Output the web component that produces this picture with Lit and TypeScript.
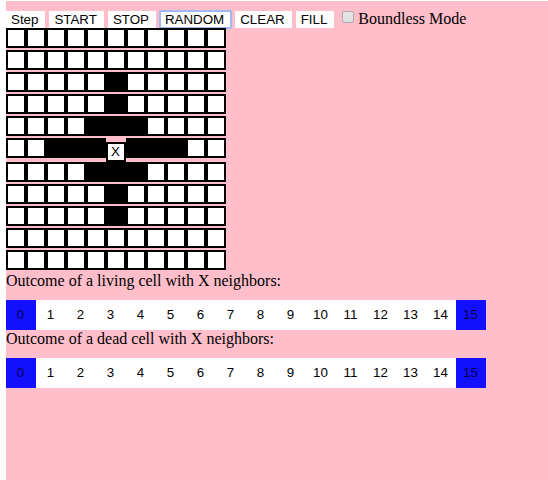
import { LitElement, html, css } from "lit";
import { customElement, state } from "lit/decorators.js";
import { classMap } from "lit/directives/class-map.js";

const START_BOARD = [
  "...........",
  "...........",
  ".....#.....",
  ".....#.....",
  "....###....",
  "..###X###..",
  "....###....",
  ".....#.....",
  ".....#.....",
  "...........",
  "...........",
];

@customElement("rule-row")
class RuleRow extends LitElement {
  static properties = { label: { type: String } };
  declare label: string;

  static styles = css`
    :host {
      display: block;
    }
    .label {
      margin: 0 0 10px;
      line-height: 18px;
    }
    .rules {
      display: flex;
    }
    .rule {
      flex: none;
      box-sizing: border-box;
      width: 30px;
      height: 30px;
      padding: 0 1px 2px 0;
      border: 0;
      background: #fff;
      color: #000;
      font-family: "Liberation Sans", Arial, sans-serif;
    }
    .on {
      background: #130fff;
      color: #06044c;
    }
  `;

  render() {
    return html`
      <p class="label">${this.label}</p>
      <div class="rules" role="group" aria-label=${this.label}>
        ${Array.from(
          { length: 16 },
          (_, n) => html`<button class=${classMap({ rule: true, on: n === 0 || n === 15 })}>${n}</button>`
        )}
      </div>
    `;
  }
}

@customElement("app-root")
class AppRoot extends LitElement {
  @state() private board = START_BOARD.map((row) => [...row]);

  static styles = css`
    :host {
      display: block;
      box-sizing: border-box;
      min-height: 100vh;
      padding: 1px 0 0 6px;
      background: #ffbeca content-box;
      font-family: "Liberation Serif", "Times New Roman", serif;
      font-size: 16px;
      color: #000;
    }
    main {
      padding-top: 10px;
    }
    .toolbar {
      display: flex;
      align-items: flex-start;
      gap: 4px;
      height: 17px;
    }
    .tool {
      height: 17px;
      padding: 0 7px 0 5px;
      border: 0;
      background: #fff;
      color: #000;
      font-family: "Liberation Sans", Arial, sans-serif;
      line-height: 17px;
      white-space: nowrap;
    }
    .active {
      outline: 2px solid #a0b9f2;
      outline-offset: -1px;
      border-radius: 1px;
    }
    .mode {
      display: flex;
      align-items: flex-start;
      gap: 4px;
      margin-left: 4px;
      line-height: 16px;
      white-space: nowrap;
    }
    .check {
      appearance: none;
      box-sizing: border-box;
      width: 12px;
      height: 12px;
      margin: 0;
      border: 1px solid #b0a8aa;
      border-radius: 2px;
      background: linear-gradient(#e6e6e6, #dcdcdc);
    }
    .check:checked {
      background: #555;
    }
    .row {
      display: flex;
      align-items: flex-start;
      margin-bottom: 2px;
    }
    .cell {
      flex: none;
      box-sizing: border-box;
      width: 20px;
      height: 20px;
      padding: 0 1px 0 0;
      border: 2px solid #000;
      background: #fff;
      color: #000;
      font-family: "Liberation Sans", Arial, sans-serif;
      line-height: 16px;
    }
    .alive {
      background: #000;
    }
    .marked {
      margin-top: 4px;
    }
    .row:has(.marked) {
      margin-bottom: 0;
    }
  `;

  private toggle(r: number, c: number) {
    this.board = this.board.map((row, y) =>
      row.map((v, x) => (y === r && x === c ? (v === "#" ? "." : "#") : v))
    );
  }

  render() {
    return html`
      <main>
        <div class="toolbar">
          ${["Step", "START", "STOP", "RANDOM", "CLEAR", "FILL"].map(
            (name) => html`<button class=${classMap({ tool: true, active: name === "RANDOM" })}>${name}</button>`
          )}
          <label class="mode"><input class="check" type="checkbox" />Boundless Mode</label>
        </div>
        ${this.board.map(
          (row, r) => html`<div class="row">
            ${row.map(
              (v, c) => html`<button
                class=${classMap({ cell: true, alive: v === "#", marked: v === "X" })}
                aria-label="Row ${r + 1}, column ${c + 1}"
                @click=${() => this.toggle(r, c)}
              >${v === "X" ? "X" : ""}</button>`
            )}
          </div>`
        )}
        <rule-row label="Outcome of a living cell with X neighbors:"></rule-row>
        <rule-row label="Outcome of a dead cell with X neighbors:"></rule-row>
      </main>
    `;
  }
}
